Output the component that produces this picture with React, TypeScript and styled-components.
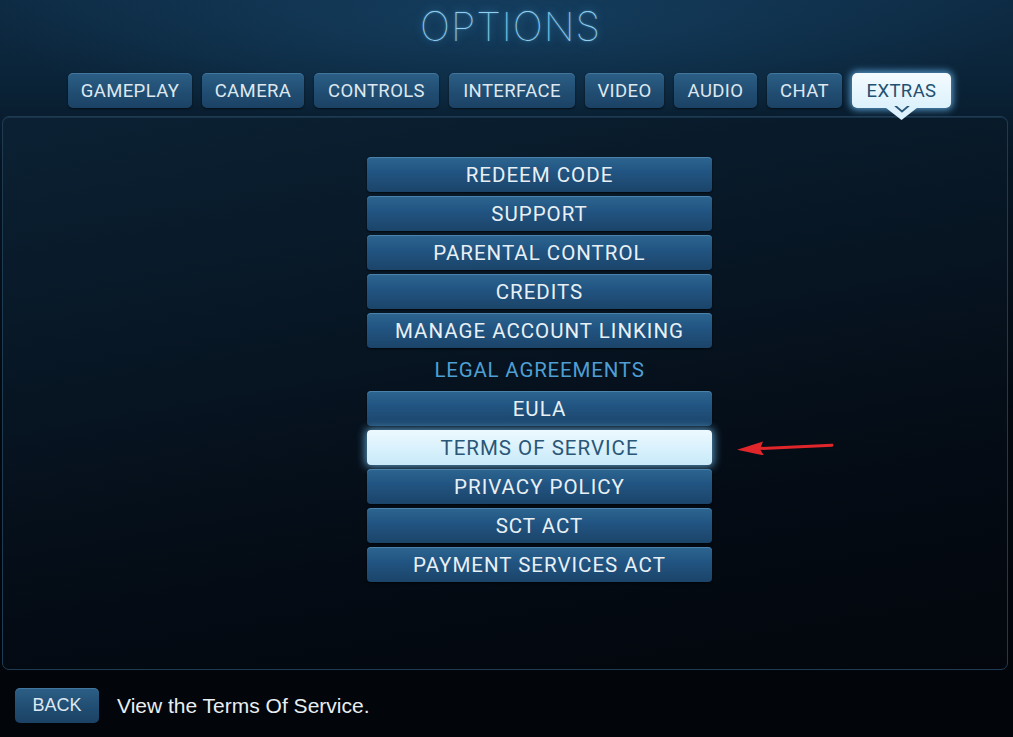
import React from "react";
import styled, { createGlobalStyle } from "styled-components";

const GlobalStyle = createGlobalStyle`
  html, body {
    margin: 0;
    padding: 0;
    background: #02060b;
  }
  * {
    box-sizing: border-box;
  }
`;

const tabs = [
  { label: "GAMEPLAY", width: 124 },
  { label: "CAMERA", width: 102 },
  { label: "CONTROLS", width: 125 },
  { label: "INTERFACE", width: 126 },
  { label: "VIDEO", width: 79 },
  { label: "AUDIO", width: 83 },
  { label: "CHAT", width: 75 },
  { label: "EXTRAS", width: 99, active: true },
];

const mainItems = ["REDEEM CODE", "SUPPORT", "PARENTAL CONTROL", "CREDITS", "MANAGE ACCOUNT LINKING"];
const legalItems = ["EULA", "TERMS OF SERVICE", "PRIVACY POLICY", "SCT ACT", "PAYMENT SERVICES ACT"];
const selected = "TERMS OF SERVICE";

const App = () => {
  return (
    <Page>
      <GlobalStyle />
      <Header>
        <Title>OPTIONS</Title>
      </Header>
      <TabBar>
        {tabs.map((t) => (
          <Tab key={t.label} $width={t.width} $active={!!t.active}>
            {t.label}
            {t.active && (
              <Pointer>
                <svg width="18" height="9" viewBox="0 0 18 9">
                  <path d="M2 1.5 L9 7.5 L16 1.5" fill="none" stroke="#2b5676" strokeWidth="1.8" />
                </svg>
              </Pointer>
            )}
          </Tab>
        ))}
      </TabBar>
      <Panel>
        <Menu>
          {mainItems.map((m) => (
            <MenuButton key={m}>{m}</MenuButton>
          ))}
          <SectionLabel>LEGAL AGREEMENTS</SectionLabel>
          {legalItems.map((m) => (
            <MenuButton key={m} $selected={m === selected}>
              {m}
              {m === selected && (
                <Arrow width="98" height="16" viewBox="0 0 98 16">
                  <path d="M96 6.2 L22 9.6" stroke="#e0262a" strokeWidth="3" strokeLinecap="round" />
                  <path d="M1 10.8 L27 2.5 L24 10.2 L28 16.5 Z" fill="#e0262a" />
                </Arrow>
              )}
            </MenuButton>
          ))}
        </Menu>
      </Panel>
      <Footer>
        <BackButton>BACK</BackButton>
        <Hint>View the Terms Of Service.</Hint>
      </Footer>
    </Page>
  );
};

export default App;

const Page = styled.div`
  width: 1013px;
  height: 737px;
  display: flex;
  flex-direction: column;
  overflow: hidden;
  background:
    radial-gradient(ellipse 520px 110px at 50% 20px, rgba(26, 78, 118, 0.55), rgba(26, 78, 118, 0) 100%),
    linear-gradient(to bottom, #0e2b44 0px, #0a2236 90px, #061523 160px, #03080f 420px, #02050a 737px);
`;

const Header = styled.div`
  height: 73px;
  display: flex;
  justify-content: center;
  align-items: flex-start;
  padding-top: 4px;
`;

const Title = styled.h1`
  margin: 0;
  padding-left: 8px;
  font-family: Inter, "DejaVu Sans", sans-serif;
  font-weight: 100;
  font-size: 40px;
  letter-spacing: 1px;
  line-height: 46px;
  color: #8fd0f0;
  text-shadow: 0 0 8px rgba(70, 160, 220, 0.75), 0 0 2px rgba(140, 210, 250, 0.6);
`;

const TabBar = styled.div`
  display: flex;
  gap: 10px;
  padding-left: 68px;
  height: 35px;
  position: relative;
  z-index: 2;
`;

const Tab = styled.div<{ $width: number; $active: boolean }>`
  position: relative;
  width: ${(p) => p.$width}px;
  height: 35px;
  border-radius: 5px;
  display: flex;
  align-items: center;
  justify-content: center;
  font-family: Roboto, "Liberation Sans", sans-serif;
  font-size: 18.5px;
  letter-spacing: 0.4px;
  color: ${(p) => (p.$active ? "#24506f" : "#dde8f0")};
  background: ${(p) =>
    p.$active
      ? "linear-gradient(to bottom, #f4fbff, #dcf1fc)"
      : "linear-gradient(to bottom, #2c5f86 0%, #214d72 55%, #1b4265 100%)"};
  box-shadow: ${(p) =>
    p.$active
      ? "0 0 7px 2px rgba(110, 190, 245, 0.75)"
      : "inset 0 1px 0 rgba(120, 175, 215, 0.3), 0 1px 2px rgba(0, 0, 0, 0.6)"};
`;

const Pointer = styled.div`
  position: absolute;
  left: 50%;
  bottom: -12px;
  width: 36px;
  height: 14px;
  margin-left: -18px;
  display: flex;
  justify-content: center;
  align-items: flex-start;
  background: #dcf1fc;
  clip-path: polygon(0 0, 100% 0, 50% 100%);
  svg {
    margin-top: -2px;
  }
`;

const Panel = styled.div`
  margin: 8px 5px 0 2px;
  height: 554px;
  border: 1px solid #1f3b52;
  border-radius: 7px;
  background: linear-gradient(170deg, #0b2133 0%, #081827 30%, #040b14 70%, #03070d 100%);
  box-shadow: inset 0 1px 0 rgba(60, 110, 150, 0.25);
  display: flex;
  justify-content: flex-start;
  padding: 40px 0 0 364px;
`;

const Menu = styled.div`
  width: 345px;
  display: flex;
  flex-direction: column;
  gap: 4px;
`;

const MenuButton = styled.div<{ $selected?: boolean }>`
  position: relative;
  height: 35px;
  border-radius: 4px;
  display: flex;
  align-items: center;
  justify-content: center;
  font-family: Roboto, "Liberation Sans", sans-serif;
  font-size: 20.5px;
  letter-spacing: 1px;
  color: ${(p) => (p.$selected ? "#2a5677" : "#e8f0f5")};
  background: ${(p) =>
    p.$selected
      ? "linear-gradient(to bottom, #eef9ff 0%, #d6f0fc 60%, #c8e9f9 100%)"
      : "linear-gradient(to bottom, #2d6690 0%, #225583 40%, #1b4469 100%)"};
  box-shadow: ${(p) =>
    p.$selected
      ? "0 0 8px 2px rgba(115, 195, 245, 0.7)"
      : "inset 0 1px 0 rgba(130, 185, 225, 0.35), 0 1px 2px rgba(0, 0, 0, 0.7)"};
`;

const Arrow = styled.svg`
  position: absolute;
  left: 369px;
  top: 9px;
`;

const SectionLabel = styled.div`
  height: 35px;
  display: flex;
  align-items: center;
  justify-content: center;
  font-family: Roboto, "Liberation Sans", sans-serif;
  font-size: 20.5px;
  letter-spacing: 0.8px;
  color: #4e9fd3;
`;

const Footer = styled.div`
  display: flex;
  align-items: center;
  padding: 18px 15px 0;
  gap: 18px;
`;

const BackButton = styled.div`
  width: 84px;
  height: 35px;
  border-radius: 5px;
  display: flex;
  align-items: center;
  justify-content: center;
  font-family: "Liberation Sans", Arial, sans-serif;
  font-size: 18px;
  color: #dde8f0;
  background: linear-gradient(to bottom, #2c5f86 0%, #214d72 55%, #1b4265 100%);
  box-shadow: inset 0 1px 0 rgba(120, 175, 215, 0.3);
`;

const Hint = styled.div`
  font-family: "Liberation Sans", Arial, sans-serif;
  font-size: 21px;
  color: #e8eef2;
`;
